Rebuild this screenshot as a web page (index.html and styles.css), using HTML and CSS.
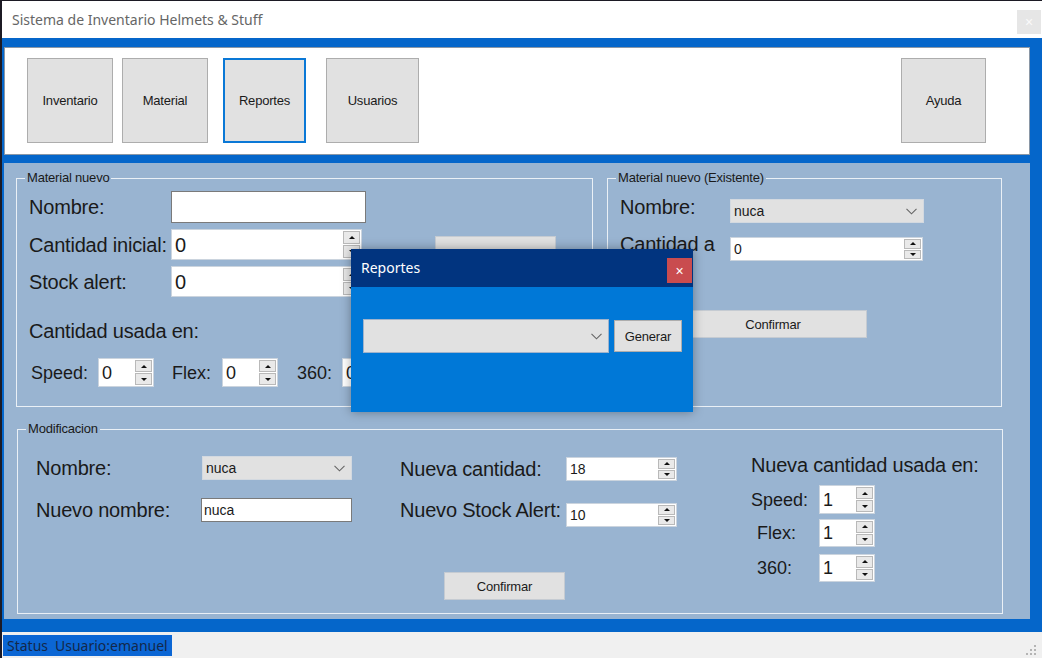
FILE: index.html
```html
<!DOCTYPE html>
<html lang="es">
<head>
<meta charset="utf-8">
<title>Sistema de Inventario Helmets &amp; Stuff</title>
<link rel="stylesheet" href="styles.css">
</head>
<body>
<div class="window">
  <div class="titlebar">
    <span class="title">Sistema de Inventario Helmets &amp; Stuff</span>
    <span class="tb-close">×</span>
  </div>
  <div class="frame">
    <div class="toolbar">
      <button class="tool b-inv">Inventario</button>
      <button class="tool b-mat">Material</button>
      <button class="tool b-rep">Reportes</button>
      <button class="tool b-usr">Usuarios</button>
      <button class="tool b-ayu">Ayuda</button>
    </div>
    <div class="main">
      <div class="top-row">
        <fieldset class="group g-new">
          <legend>Material nuevo</legend>
          <div class="new-body">
            <div class="new-col">
              <div class="row r1"><span class="lbl big w142">Nombre:</span><div class="textbox tb-new"></div></div>
              <div class="row r2"><span class="lbl big w142">Cantidad inicial:</span><div class="num n-wide big"><span class="val">0</span><span class="spin"><i class="up"></i><i class="down"></i></span></div></div>
              <div class="row r3"><span class="lbl big w142">Stock alert:</span><div class="num n-wide big"><span class="val">0</span><span class="spin"><i class="up"></i><i class="down"></i></span></div></div>
              <div class="lbl big used-lbl">Cantidad usada en:</div>
              <div class="row r5">
                <span class="lbl mid l-speed">Speed:</span>
                <div class="num n-small mid"><span class="val">0</span><span class="spin"><i class="up"></i><i class="down"></i></span></div>
                <span class="lbl mid l-flex">Flex:</span>
                <div class="num n-small mid"><span class="val">0</span><span class="spin"><i class="up"></i><i class="down"></i></span></div>
                <span class="lbl mid l-360">360:</span>
                <div class="num n-small mid"><span class="val">0</span><span class="spin"><i class="up"></i><i class="down"></i></span></div>
              </div>
            </div>
            <div class="new-aside"><button class="btn new-confirm">Confirmar</button></div>
          </div>
        </fieldset>
        <fieldset class="group g-exist">
          <legend>Material nuevo (Existente)</legend>
          <div class="ex-body">
            <div class="row ex-r1"><span class="lbl big w110 ex-nom">Nombre:</span>
              <div class="combo ex-combo"><span class="txt">nuca</span><svg class="chev" width="11" height="7" viewBox="0 0 11 7"><polyline points="0.5,0.8 5.5,5.8 10.5,0.8" fill="none" stroke="#666" stroke-width="1.1"/></svg></div>
            </div>
            <div class="row ex-r2"><span class="lbl big ex-lbl">Cantidad a agregar:</span>
              <div class="num ex-num small"><span class="val">0</span><span class="spin"><i class="up"></i><i class="down"></i></span></div>
            </div>
            <button class="btn ex-confirm">Confirmar</button>
          </div>
        </fieldset>
      </div>
      <fieldset class="group g-mod">
        <legend>Modificacion</legend>
        <div class="mod-body">
          <div class="mod-c1">
            <div class="row m-a"><span class="lbl big w166">Nombre:</span>
              <div class="combo mod-combo"><span class="txt">nuca</span><svg class="chev" width="11" height="7" viewBox="0 0 11 7"><polyline points="0.5,0.8 5.5,5.8 10.5,0.8" fill="none" stroke="#666" stroke-width="1.1"/></svg></div>
            </div>
            <div class="row m-b"><span class="lbl big w165">Nuevo nombre:</span><div class="textbox tb-mod"><span class="val">nuca</span></div></div>
          </div>
          <div class="mod-c2">
            <div class="row m-a2"><span class="lbl big w166">Nueva cantidad:</span>
              <div class="num mod-num small"><span class="val">18</span><span class="spin"><i class="up"></i><i class="down"></i></span></div>
            </div>
            <div class="row m-b2"><span class="lbl big w166 m-b2-lbl">Nuevo Stock Alert:</span>
              <div class="num mod-num small"><span class="val">10</span><span class="spin"><i class="up"></i><i class="down"></i></span></div>
            </div>
            <button class="btn mod-confirm">Confirmar</button>
          </div>
          <div class="mod-c3">
            <div class="lbl big c3-lbl">Nueva cantidad usada en:</div>
            <div class="row c3-speed"><span class="lbl mid w68">Speed:</span><div class="num n-small mid"><span class="val">1</span><span class="spin"><i class="up"></i><i class="down"></i></span></div></div>
            <div class="row c3-flex"><span class="lbl mid w68 ind">Flex:</span><div class="num n-small mid n28"><span class="val">1</span><span class="spin"><i class="up"></i><i class="down"></i></span></div></div>
            <div class="row c3-360"><span class="lbl mid w68 ind">360:</span><div class="num n-small mid n28"><span class="val">1</span><span class="spin"><i class="up"></i><i class="down"></i></span></div></div>
          </div>
        </div>
      </fieldset>
    </div>
  </div>
  <div class="status">
    <div class="status-hl"><span>Status</span><span>Usuario:emanuel</span></div>
    <svg class="grip" width="12" height="12" viewBox="0 0 12 12">
      <rect x="9" y="1" width="2" height="2" fill="#b4b4b4"/>
      <rect x="5" y="5" width="2" height="2" fill="#b4b4b4"/>
      <rect x="9" y="5" width="2" height="2" fill="#b4b4b4"/>
      <rect x="1" y="9" width="2" height="2" fill="#b4b4b4"/>
      <rect x="5" y="9" width="2" height="2" fill="#b4b4b4"/>
      <rect x="9" y="9" width="2" height="2" fill="#b4b4b4"/>
    </svg>
  </div>

  <div class="dialog">
    <div class="dlg-title"><span class="dlg-t">Reportes</span><span class="dlg-close">×</span></div>
    <div class="dlg-body">
      <div class="combo dlg-combo"><span class="txt"></span><svg class="chev" width="11" height="7" viewBox="0 0 11 7"><polyline points="0.5,0.8 5.5,5.8 10.5,0.8" fill="none" stroke="#666" stroke-width="1.1"/></svg></div>
      <button class="btn dlg-btn">Generar</button>
    </div>
  </div>
</div>
</body>
</html>
```

FILE: styles.css
```css
* { box-sizing: border-box; }
html, body { margin: 0; padding: 0; }
body {
  width: 1042px;
  height: 658px;
  overflow: hidden;
  background: #1c1a24;
  font-family: "Liberation Sans", Arial, sans-serif;
  color: #1a1a1a;
}
.window {
  position: relative;
  margin: 1px 0 0 2px;
  width: 1040px;
  height: 657px;
  background: #ffffff;
  display: flex;
  flex-direction: column;
}
.titlebar { height: 37px; display: flex; align-items: flex-start; flex: none; }
.title {
  font-family: "Noto Sans", sans-serif;
  font-size: 14px;
  line-height: 19px;
  color: #666666;
  margin: 9px 0 0 10px;
}
.tb-close {
  margin: 9px 1px 0 auto;
  width: 24px;
  height: 24px;
  background: #e6e6e6;
  color: #fafafa;
  font-size: 14px;
  display: flex;
  align-items: center;
  justify-content: center;
}
.frame {
  flex: none;
  height: 594px;
  background: #0566ca;
  padding: 9px 12px 13px 2px;
  display: flex;
  flex-direction: column;
}
.toolbar {
  height: 108px;
  flex: none;
  background: #ffffff;
  border: 1px solid #8a97a6;
  display: flex;
  align-items: flex-start;
  padding: 10px 0 0 22px;
}
.tool {
  height: 85px;
  margin: 0;
  padding: 0;
  background: #e1e1e1;
  border: 1px solid #adadad;
  font-family: "Liberation Sans", Arial, sans-serif;
  font-size: 13px;
  letter-spacing: -0.2px;
  color: #1a1a1a;
}
.b-inv { width: 86px; }
.b-mat { width: 86px; margin-left: 9px; }
.b-rep { width: 83px; margin-left: 15px; border: 2px solid #0a78d6; }
.b-usr { width: 93px; margin-left: 20px; }
.b-ayu { width: 85px; margin-left: auto; margin-right: 43px; }

.main {
  margin-top: 8px;
  height: 456px;
  flex: none;
  background: #99b4d1;
  padding: 8px 0 0 12px;
}
.top-row { display: flex; gap: 14px; }
fieldset.group {
  margin: 0;
  padding: 0;
  border: 1px solid #eaf0f6;
  min-width: 0;
}
.group legend {
  font-size: 13px;
  line-height: 14px;
  padding: 0 2px;
  margin-left: 8px;
  letter-spacing: -0.2px;
  color: #1a1a1a;
}
fieldset.g-new { width: 577px; height: 236px; }
fieldset.g-exist { width: 395px; height: 236px; }
fieldset.g-mod { width: 986px; height: 192px; margin: 15px 0 0 1px; }

.row { display: flex; align-items: center; }
.lbl { white-space: nowrap; color: #1a1a1a; }
.big { font-size: 20px; line-height: 22px; letter-spacing: -0.2px; }
.mid { font-size: 18px; line-height: 22px; }
.small { font-size: 14px; }
.w142 { width: 142px; flex: none; }
.w110 { width: 110px; flex: none; }
.w166 { width: 166px; flex: none; }
.w165 { width: 165px; flex: none; }
.w68 { width: 68px; flex: none; }
.ind { padding-left: 6px; }

.textbox {
  background: #ffffff;
  border: 1px solid #7a7a7a;
  display: flex;
  align-items: center;
}
.textbox .val { padding-left: 2px; font-size: 14px; }

.num {
  display: flex;
  background: #ffffff;
  border: 1px solid #cbd4de;
  flex: none;
}
.num .val { flex: 1; padding-left: 3px; display: flex; align-items: center; }
.spin {
  width: 18px;
  display: flex;
  flex-direction: column;
  padding: 1px 1px 1px 0;
  gap: 1px;
}
.spin i {
  flex: 1;
  background: #e9e9e9;
  border: 1px solid #b9b9b9;
  display: flex;
  align-items: center;
  justify-content: center;
}
.spin i::before {
  content: "";
  width: 0;
  height: 0;
  border-left: 3px solid transparent;
  border-right: 3px solid transparent;
}
.spin .up::before { border-bottom: 3px solid #111; }
.spin .down::before { border-top: 3px solid #111; }

.btn {
  margin: 0;
  padding: 0;
  background: #e1e1e1;
  border: 1px solid #c5cbd2;
  font-family: "Liberation Sans", Arial, sans-serif;
  font-size: 13px;
  letter-spacing: -0.2px;
  color: #1a1a1a;
}

/* Material nuevo */
.new-body { display: flex; padding-left: 12px; }
.new-col { width: 406px; display: flex; flex-direction: column; flex: none; }
.r1 { margin-top: 6px; height: 32px; }
.tb-new { width: 195px; height: 32px; }
.r2 { margin-top: 6px; }
.r3 { margin-top: 6px; }
.n-wide { width: 191px; height: 31px; }
.used-lbl { margin-top: 23px; }
.r5 { margin-top: 16px; }
.n-small { width: 56px; height: 29px; }
.n28 { height: 28px; }
.l-speed { margin-left: 2px; width: 67px; }
.l-flex { margin-left: 18px; width: 50px; }
.l-360 { margin-left: 19px; width: 45px; }
.new-aside { padding-top: 51px; }
.new-confirm { width: 121px; height: 46px; }

/* Existente */
.ex-body { padding-left: 12px; display: flex; flex-direction: column; align-items: flex-start; }
.ex-r1 { margin-top: 14px; align-items: flex-start; }
.ex-nom { margin-top: -3px; }
.ex-combo { width: 194px; height: 24px; }
.ex-r2 { margin-top: 14px; align-items: flex-start; }
.ex-lbl { width: 105px; margin-right: 5px; margin-top: -4px; white-space: normal; flex: none; }
.ex-num { width: 193px; height: 24px; }
.ex-confirm { margin: 33px 0 0 59px; width: 188px; height: 28px; }

.combo {
  display: flex;
  align-items: center;
  background: #e1e1e1;
  border: 1px solid #d3d9e0;
  padding-left: 3px;
  font-size: 14px;
  flex: none;
}
.combo .txt { flex: 1; }
.combo .chev { margin-right: 6px; }

/* Modificacion */
.mod-body { display: flex; padding-left: 18px; }
.mod-c1 { width: 364px; flex: none; display: flex; flex-direction: column; }
.mod-c2 { width: 351px; flex: none; display: flex; flex-direction: column; align-items: flex-start; }
.mod-c3 { display: flex; flex-direction: column; }
.m-a { margin-top: 20px; height: 24px; }
.mod-combo { width: 150px; height: 24px; }
.m-b { margin-top: 18px; height: 24px; }
.tb-mod { width: 151px; height: 24px; }
.m-a2 { margin-top: 21px; height: 24px; }
.m-b2 { margin-top: 22px; height: 24px; align-items: flex-start; }
.m-b2-lbl { margin-top: -4px; }
.mod-num { width: 111px; height: 24px; }
.mod-confirm { margin: 45px 0 0 44px; width: 121px; height: 28px; }
.c3-lbl { margin-top: 18px; }
.c3-speed { margin-top: 9px; }
.c3-flex { margin-top: 5px; }
.c3-360 { margin-top: 7px; }

/* Status bar */
.status {
  height: 26px;
  flex: none;
  background: #f0f0f0;
  display: flex;
  align-items: flex-start;
}
.status-hl {
  margin: 3px 0 0 1px;
  height: 21px;
  background: #0b66d4;
  display: flex;
  align-items: center;
  gap: 7px;
  padding: 0 4px 0 4px;
  font-family: "Noto Sans", sans-serif;
  font-size: 14px;
  color: #13284a;
}
.grip { margin: 12px 5px 0 auto; }

/* Dialog */
.dialog {
  position: absolute;
  left: 349px;
  top: 248px;
  width: 342px;
  height: 163px;
  box-shadow: 0 0 10px rgba(0, 0, 0, 0.35);
  display: flex;
  flex-direction: column;
}
.dlg-title {
  height: 38px;
  flex: none;
  background: #01347f;
  display: flex;
  align-items: flex-start;
}
.dlg-t {
  margin: 9px 0 0 10px;
  color: #ffffff;
  font-family: "Noto Sans", sans-serif;
  font-size: 14px;
  line-height: 20px;
}
.dlg-close {
  margin: 9px 1px 0 auto;
  width: 25px;
  height: 25px;
  background: #c94c4f;
  color: #ffffff;
  font-size: 14px;
  display: flex;
  align-items: center;
  justify-content: center;
}
.dlg-body {
  flex: 1;
  background: #0078d7;
  display: flex;
  align-items: flex-start;
  padding: 32px 0 0 12px;
  gap: 5px;
}
.dlg-combo { width: 246px; height: 34px; border-color: #9fb3cc; }
.dlg-btn { width: 68px; height: 32px; margin-top: 1px; border-color: #adadad; }
```
